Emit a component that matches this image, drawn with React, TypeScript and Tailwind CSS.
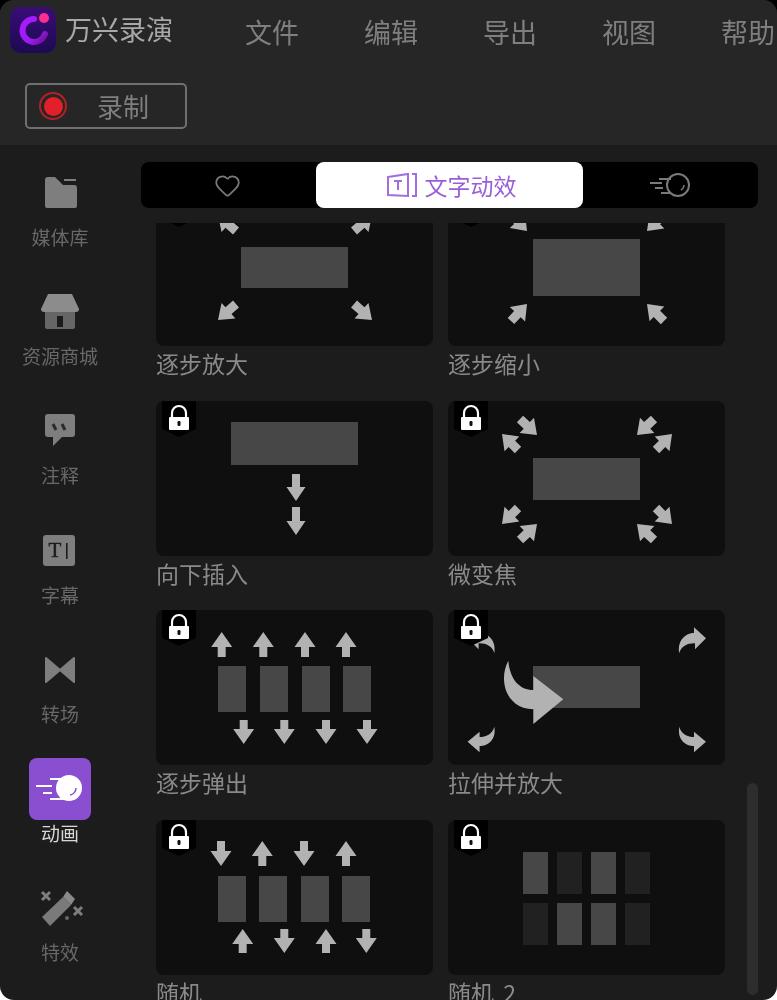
import React from "react";
import { Heart } from "lucide-react";

const A = "#b2b2b2";
const R = "#474747";

function Arr({ t, h, w = 19, hl = 14, sw = 8 }: { t: [number, number]; h: [number, number]; w?: number; hl?: number; sw?: number }) {
  const dx = h[0] - t[0];
  const dy = h[1] - t[1];
  const L = Math.hypot(dx, dy);
  const ux = dx / L;
  const uy = dy / L;
  const nx = -uy;
  const ny = ux;
  const bx = h[0] - ux * hl;
  const by = h[1] - uy * hl;
  const p = [
    [t[0] + (nx * sw) / 2, t[1] + (ny * sw) / 2],
    [bx + (nx * sw) / 2, by + (ny * sw) / 2],
    [bx + (nx * w) / 2, by + (ny * w) / 2],
    h,
    [bx - (nx * w) / 2, by - (ny * w) / 2],
    [bx - (nx * sw) / 2, by - (ny * sw) / 2],
    [t[0] - (nx * sw) / 2, t[1] - (ny * sw) / 2],
  ];
  return <polygon points={p.map((q) => `${q[0].toFixed(1)},${q[1].toFixed(1)}`).join(" ")} fill={A} />;
}

function Diag({ t, h }: { t: [number, number]; h: [number, number] }) {
  return <Arr t={t} h={h} w={21} hl={14} sw={9} />;
}

function Lock() {
  return (
    <g>
      <path d="M6 0H40V28L23 36L6 28Z" fill="#000" />
      <path d="M16 17V12a7 7 0 0 1 14 0V17" fill="none" stroke="#fff" strokeWidth="2.2" />
      <rect x="13" y="16" width="20" height="13" rx="1" fill="#fff" />
      <rect x="21.5" y="20" width="3" height="5" rx="1.2" fill="#111" />
    </g>
  );
}

function Rects({ xs, y, w, h, fill = R }: { xs: number[]; y: number; w: number; h: number; fill?: string }) {
  return (
    <>
      {xs.map((x) => (
        <rect key={x} x={x} y={y} width={w} height={h} fill={fill} />
      ))}
    </>
  );
}

const SMALL = "M231.3 43.3C229 30 238 23 246 23L246 17.3L258 28.3L247 39.3L247 33.3C240 33 233 36 231.3 43.3Z";
const SMALL_B = "M231.3 116.7C233 124 240 127 246 127L246 121.7L258 131.7L246 142.3L246 136C238 136 229 130 231.3 116.7Z";

const thumbs: React.ReactNode[] = [
  <>
    <rect x="85" y="56" width="107" height="41" fill={R} />
    <Diag t={[80, 113]} h={[62, 129]} />
    <Diag t={[198, 113]} h={[216, 129]} />
    <Diag t={[80, 40]} h={[62, 24]} />
    <Diag t={[198, 40]} h={[216, 24]} />
    <Lock />
  </>,
  <>
    <rect x="85" y="48" width="107" height="57" fill={R} />
    <Diag t={[63, 130]} h={[79, 113]} />
    <Diag t={[216, 130]} h={[199, 113]} />
    <Diag t={[63, 23]} h={[79, 40]} />
    <Diag t={[216, 23]} h={[199, 40]} />
    <Lock />
  </>,
  <>
    <rect x="75" y="21" width="127" height="43" fill={R} />
    <Arr t={[140, 73]} h={[140, 100]} />
    <Arr t={[140, 106]} h={[140, 134]} />
    <Lock />
  </>,
  <>
    <rect x="85" y="57" width="107" height="42" fill={R} />
    <Diag t={[72, 18]} h={[89, 34]} />
    <Diag t={[70, 49]} h={[54, 33]} />
    <Diag t={[206, 18]} h={[189, 34]} />
    <Diag t={[208, 49]} h={[224, 33]} />
    <Diag t={[70, 107]} h={[54, 123]} />
    <Diag t={[72, 139]} h={[89, 123]} />
    <Diag t={[208, 107]} h={[224, 123]} />
    <Diag t={[206, 139]} h={[189, 123]} />
    <Lock />
  </>,
  <>
    <Rects xs={[62, 104, 146, 187]} y={56} w={28} h={46} />
    {[65.7, 107.3, 149, 190].map((x) => (
      <Arr key={x} t={[x, 47]} h={[x, 22]} w={21} hl={15} />
    ))}
    {[87.7, 128.3, 170, 211].map((x) => (
      <Arr key={x} t={[x, 110]} h={[x, 134]} w={21} hl={15} />
    ))}
    <Lock />
  </>,
  <>
    <rect x="85" y="56" width="107" height="42" fill={R} />
    <path d="M60.3 50.7C50 70 58 99 85.3 99.3L85.3 114L115.3 89.3L85.3 66L85.3 80C72 80 62 70 60.3 50.7Z" fill={A} />
    <path d={SMALL} fill={A} />
    <path d={SMALL_B} fill={A} />
    <g transform="translate(277.6 0) scale(-1 1)">
      <path d={SMALL} fill={A} />
      <path d={SMALL_B} fill={A} />
    </g>
    <Lock />
  </>,
  <>
    <Rects xs={[62, 103, 145, 186]} y={56} w={28} h={46} />
    <Arr t={[65, 21]} h={[65, 46]} w={21} hl={15} />
    <Arr t={[106.3, 46]} h={[106.3, 21]} w={21} hl={15} />
    <Arr t={[148, 21]} h={[148, 46]} w={21} hl={15} />
    <Arr t={[190, 46]} h={[190, 21]} w={21} hl={15} />
    <Arr t={[86.7, 133]} h={[86.7, 109]} w={21} hl={15} />
    <Arr t={[128.3, 109]} h={[128.3, 133]} w={21} hl={15} />
    <Arr t={[170, 133]} h={[170, 109]} w={21} hl={15} />
    <Arr t={[210.3, 109]} h={[210.3, 133]} w={21} hl={15} />
    <Lock />
  </>,
  <>
    <Rects xs={[75, 143]} y={32} w={25} h={42} />
    <Rects xs={[109, 177]} y={32} w={25} h={42} fill="#212121" />
    <Rects xs={[109, 143]} y={83} w={25} h={42} />
    <Rects xs={[75, 177]} y={83} w={25} h={42} fill="#212121" />
    <Lock />
  </>,
];

const labels = ["逐步放大", "逐步缩小", "向下插入", "微变焦", "逐步弹出", "拉伸并放大", "随机", "随机 2"];

const G = "#7e7e7e";
const navIcons: React.ReactNode[] = [
  <>
    <path d="M16 18a3 3 0 0 1 3-3h7l8 8h11a3 3 0 0 1 3 3v18a2 2 0 0 1-2 2H18a2 2 0 0 1-2-2Z" fill={G} />
    <rect x="35" y="17" width="12" height="2" fill={G} />
  </>,
  <>
    <path d="M16 28H46V46a2 2 0 0 1-2 2H18a2 2 0 0 1-2-2Z" fill="#666" />
    <rect x="28" y="35" width="6" height="11" fill="#1c1c1c" />
    <path d="M19 13H43L50 28a3 3 0 0 1-3 3H15a3 3 0 0 1-3-3Z" fill="#8c8c8c" />
  </>,
  <>
    <path d="M19 14H43a3 3 0 0 1 3 3V34a3 3 0 0 1-3 3H33L24 46V37H19a3 3 0 0 1-3-3V17a3 3 0 0 1 3-3Z" fill={G} />
    <path d="M24 24L27 30M33 24L36 30" stroke="#2c2c2c" strokeWidth="3" />
  </>,
  <>
    <rect x="14" y="15" width="32" height="31" rx="3" fill={G} />
    <text x="26" y="37" textAnchor="middle" fontFamily="'Liberation Serif', serif" fontSize="21" fill="#1c1c1c" stroke="#1c1c1c" strokeWidth="0.4">
      T
    </text>
    <rect x="37" y="23" width="1.6" height="16" fill="#1c1c1c" />
  </>,
  <path d="M17 19L31 31L17 43ZM45 19L31 31L45 43Z" fill={G} stroke={G} strokeWidth="2" strokeLinejoin="round" />,
  <>
    <circle cx="40" cy="30" r="13" fill="#fff" />
    <path d="M47 30a7 7 0 0 1-6 7" fill="none" stroke="#8a4fd0" strokeWidth="1.5" />
    <path d="M21 21H35M7 28H23M14 35H23M21 41H35" stroke="#fff" strokeWidth="2" />
  </>,
  <>
    <path d="M13 40L34 20L42 28L21 49Z" fill="#7a7a7a" />
    <path d="M34 20L38 14L46 22L42 28Z" fill="#8a8a8a" />
    <path d="M13 15L21 23M21 15L13 23M45 30L53 38M53 30L45 38" stroke={G} strokeWidth="3" />
    <circle cx="38" cy="41" r="2" fill="#666" />
  </>,
];

const navLabels = ["媒体库", "资源商城", "注释", "字幕", "转场", "动画", "特效"];
const menu = ["文件", "编辑", "导出", "视图", "帮助"];

function Logo() {
  return (
    <svg width="46" height="46" viewBox="0 0 46 46" className="shrink-0">
      <defs>
        <linearGradient id="lg" x1="0" y1="0" x2="0" y2="1">
          <stop offset="0" stopColor="#3a0c78" />
          <stop offset="1" stopColor="#1c0a52" />
        </linearGradient>
        <linearGradient id="arc" x1="0" y1="0" x2="1" y2="1">
          <stop offset="0" stopColor="#a81cff" />
          <stop offset="0.65" stopColor="#9a1cf0" />
          <stop offset="1" stopColor="#6a1090" />
        </linearGradient>
      </defs>
      <rect width="46" height="46" rx="11" fill="url(#lg)" />
      <path d="M24 12a11.5 11.5 0 1 0 11 15" fill="none" stroke="url(#arc)" strokeWidth="6" strokeLinecap="round" />
      <circle cx="34" cy="11" r="5" fill="#ff2d8f" />
    </svg>
  );
}

export default function App() {
  return (
    <div className="w-[777px] h-[1000px] bg-[linear-gradient(#000_50%,#fff_50%)] font-['Noto_Sans_CJK_SC','Noto_Sans',sans-serif]">
      <div className="relative w-full h-full rounded-[14px] overflow-hidden bg-[#1c1c1c] flex flex-col blur-[0.45px]">
        <header className="h-[145px] shrink-0 bg-[#262626] flex flex-col">
          <div className="h-[83px] shrink-0 flex items-start pt-[7px] pl-[10px] whitespace-nowrap">
            <Logo />
            <span className="ml-[9px] -mt-[1px] text-[27px] leading-[46px] text-[#a8a8a8]">万兴录演</span>
            <nav className="ml-[72px] mt-[2px] flex gap-[65px] text-[27px] leading-[46px] text-[#7f7f7f]">
              {menu.map((m) => (
                <span key={m}>{m}</span>
              ))}
            </nav>
          </div>
          <div className="pl-[25px]">
            <button className="w-[162px] h-[46px] border-2 border-[#707070] rounded-[5px] flex items-center">
              <span className="ml-[12px] w-[28px] h-[28px] rounded-full border-2 border-[#b02228] flex items-center justify-center">
                <span className="block w-[19px] h-[19px] rounded-full bg-[#e2202a]" />
              </span>
              <span className="ml-[30px] text-[26px] leading-[40px] text-[#7f7f7f]">录制</span>
            </button>
          </div>
        </header>
        <div className="flex-1 min-h-0 flex">
          <aside className="w-[141px] shrink-0 pt-[17px] pl-[29px] flex flex-col gap-[29.2px]">
            {navLabels.map((l, i) => (
              <div key={l} className="w-[62px] flex flex-col items-center">
                <div className={`w-[62px] h-[62px] rounded-[8px] ${i === 5 ? "bg-[#8a4fd0]" : ""}`}>
                  <svg width="62" height="62" viewBox="0 0 62 62">
                    {navIcons[i]}
                  </svg>
                </div>
                <span className={`h-[28px] leading-[26px] text-[19px] whitespace-nowrap ${i === 5 ? "text-[#d8d8d8]" : "text-[#686868]"}`}>{l}</span>
              </div>
            ))}
          </aside>
          <main className="flex-1 min-w-0 flex flex-col pt-[17px]">
            <div className="w-[617px] h-[46px] shrink-0 bg-black rounded-[8px] flex">
              <div className="w-[175px] pr-[2px] flex items-center justify-center">
                <Heart size={27} strokeWidth={1.5} color="#7a7a7a" />
              </div>
              <div className="w-[267px] pl-[4px] bg-white rounded-[8px] flex items-center justify-center gap-[8px] text-[#9a5fd8]">
                <svg width="30" height="28" viewBox="0 0 30 28" fill="none" stroke="#a06ede" strokeWidth="2">
                  <path d="M1 6L21 3V25L1 24Z" />
                  <path d="M7 10H15M11 10V19" />
                  <path d="M25 3H29V25H25" />
                </svg>
                <span className="text-[23px] leading-[44px]">文字动效</span>
              </div>
              <div className="flex-1 pr-[2px] flex items-center justify-center">
                <svg width="42" height="28" viewBox="0 0 42 28" fill="none" stroke="#7a7a7a" strokeWidth="2">
                  <circle cx="29" cy="14" r="11" />
                  <path d="M35 14a6 6 0 0 1-3 5" strokeWidth="1.5" />
                  <path d="M10 8H22M1 12H13M6 17H14M12 22H22" />
                </svg>
              </div>
            </div>
            <div className="mt-[15px] flex-1 min-h-0 overflow-hidden pl-[15px]">
              <div className="-mt-[32px] grid grid-cols-[277px_277px] gap-x-[15px] gap-y-[18.5px]">
                {labels.map((l, i) => (
                  <div key={l}>
                    <div className="h-[155px] bg-[#0f0f0f] rounded-[8px] overflow-hidden">
                      <svg width="277" height="155" viewBox="0 0 277 155">
                        {thumbs[i]}
                      </svg>
                    </div>
                    <div className="h-[36px] leading-[34px] text-[23px] whitespace-pre [word-spacing:4px] text-[#8a8a8a]">{l}</div>
                  </div>
                ))}
              </div>
            </div>
          </main>
        </div>
        <div className="absolute left-[747px] top-[783px] w-[11px] h-[212px] rounded-full bg-[#2d2d2d]" />
      </div>
    </div>
  );
}
